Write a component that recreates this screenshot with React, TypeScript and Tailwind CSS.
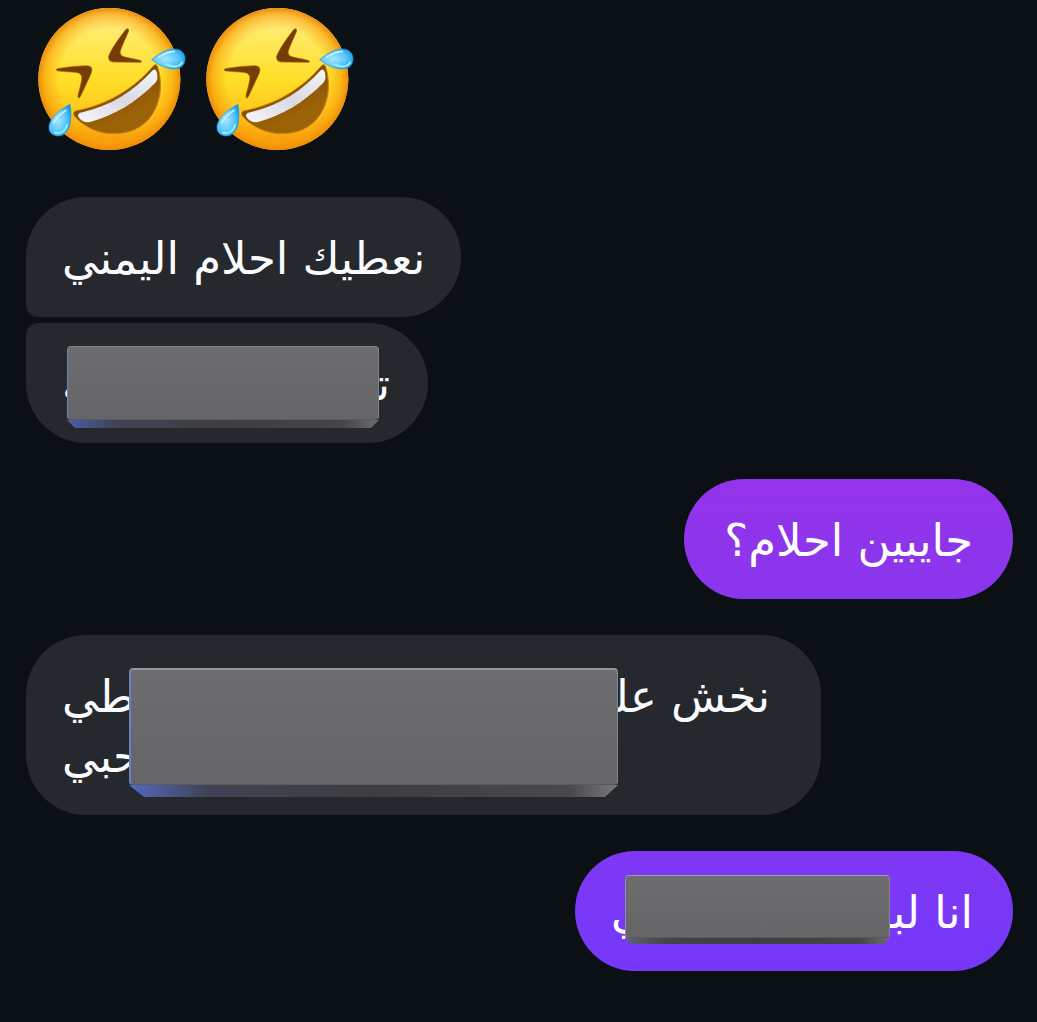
import type { ReactNode } from "react"
import clsx from "clsx"

const EMOJI = ["first", "second"]

function RollingLaugh({ id }: { id: string }) {
  const url = (name: string) => `url(#${id}-${name})`

  return (
    <svg viewBox="54 24 444 429" className="h-[143px] w-[148px]" role="img" aria-label="Rolling on the floor laughing">
      <defs>
        <linearGradient id={`${id}-face`} x1="0.5" y1="0" x2="0.5" y2="1">
          <stop offset="0" stopColor="#fff3a0" />
          <stop offset="0.2" stopColor="#ffea62" />
          <stop offset="0.5" stopColor="#ffdf28" />
          <stop offset="0.75" stopColor="#ffc61c" />
          <stop offset="1" stopColor="#f7980c" />
        </linearGradient>
        <radialGradient id={`${id}-rim`} cx="0.5" cy="0.5" r="0.5">
          <stop offset="0.7" stopColor="#f7a20a" stopOpacity="0" />
          <stop offset="0.9" stopColor="#f79c08" stopOpacity="0.6" />
          <stop offset="1" stopColor="#ee8c08" />
        </radialGradient>
        <linearGradient id={`${id}-mouth`} x1="0" y1="0" x2="0.5" y2="0.8">
          <stop offset="0" stopColor="#632f03" />
          <stop offset="1" stopColor="#9c6207" />
        </linearGradient>
        <linearGradient id={`${id}-teeth`} x1="0" y1="1" x2="1" y2="0">
          <stop offset="0" stopColor="#f6f6fa" />
          <stop offset="0.5" stopColor="#d9d9e2" />
          <stop offset="1" stopColor="#f4f4f8" />
        </linearGradient>
        <radialGradient id={`${id}-tear`} cx="0.4" cy="0.5" r="0.65">
          <stop offset="0" stopColor="#a4e7ff" />
          <stop offset="0.6" stopColor="#5cc6fa" />
          <stop offset="1" stopColor="#1b9ae6" />
        </radialGradient>
      </defs>
      <circle cx="268" cy="237" r="213" fill={url("face")} />
      <circle cx="268" cy="237" r="213" fill={url("rim")} />
      <g fill="#753c03" stroke="#a86505" strokeWidth="2" strokeLinejoin="round">
        <path d="M325 87C320 84 315 91 310 98C293 120 278 142 268 163C262 176 268 186 282 186L360 187C366 187 366 183 360 181L315 171C300 167 298 160 303 147C310 128 320 108 326 94Z" />
        <path d="M111 206C107 209 110 213 116 213L165 217C183 219 187 227 185 240C182 257 177 273 174 286C173 296 178 296 182 288L209 230C221 206 216 198 200 197C168 198 139 201 111 206Z" />
      </g>
      <path
        d="M161 338C164 332 170 332 178 330C265 312 341 266 398 200C404 192 410 192 413 200C438 281 407 370 330 394C264 414 200 391 162 347Z"
        fill={url("mouth")}
        stroke="#cf8607"
        strokeWidth="3"
      />
      <path
        d="M174 345C176 338 182 338 190 336C270 318 342 274 398 211C404 205 409 209 411 218C414 234 412 241 406 248C350 306 283 346 210 366C196 369 187 364 180 357C176 352 173 349 174 345Z"
        fill={url("teeth")}
      />
      <path d="M395 179C414 163 433 149 460 147C483 146 496 160 495 178C494 198 480 208 459 207C434 205 414 194 395 179Z" fill={url("tear")} stroke="#159bea" strokeWidth="2" />
      <path d="M150 313C154 335 154 357 149 377C143 398 127 411 108 407C89 403 82 387 90 368C99 345 123 327 150 313Z" fill={url("tear")} stroke="#159bea" strokeWidth="2" />
      <path d="M416 172C433 161 448 154 463 155M101 369C109 352 123 341 138 331" fill="none" stroke="#c2f1ff" strokeWidth="5" strokeLinecap="round" />
      <path d="M438 193C461 204 478 200 487 187M104 398C122 403 136 393 142 374" fill="none" stroke="#98f5ff" strokeWidth="5" strokeLinecap="round" />
    </svg>
  )
}

function Bubble({ className, children }: { className?: string; children: ReactNode }) {
  return (
    <div dir="rtl" className={clsx("relative max-w-full pt-8 pb-7 text-[45px] leading-[60px]", className)}>
      {children}
    </div>
  )
}

// Solid slab laid over part of a message, with a bevelled lower edge.
function Slab({ className, edge, bevel }: { className: string; edge: string; bevel: string }) {
  return (
    <div className={clsx("absolute flex flex-col", className)}>
      <div
        className={clsx(
          "flex-1 rounded-[4px] border border-r-[#858587] border-b-[#5b5b5d] bg-linear-to-b from-[#6d6d70] to-[#656567]",
          edge,
        )}
      />
      <div className={bevel} />
    </div>
  )
}

export default function App() {
  return (
    <main className="flex min-h-screen flex-col items-start bg-[#0b1014] pt-2 pr-6 pb-[51px] pl-[26px] font-['DejaVu_Sans',sans-serif] text-[#f9fbff]">
      <div className="mb-[46px] flex gap-5 pl-3">
        {EMOJI.map((id) => (
          <RollingLaugh key={id} id={id} />
        ))}
      </div>

      <Bubble className="mb-1.5 rounded-[60px] rounded-bl-xl bg-[#25282d] px-9">نعطيك احلام اليمني</Bubble>

      <Bubble className="w-[402px] rounded-[60px] rounded-tl-xl bg-[#25282d] pr-[38px] pl-9">
        <div className="flex justify-between">
          <span>تـ</span>
          <span>ـه</span>
        </div>
        <Slab
          className="top-[23px] left-[41px] h-[82px] w-[312px]"
          edge="border-t-[#858589] border-l-[#7582b3]"
          bevel="h-2 bg-[linear-gradient(90deg,#4a5da8,#404354_16%,#3e3e40_50%,#454546_88%,#6c6c6e)] [clip-path:polygon(0_0,100%_0,calc(100%-8px)_100%,8px_100%)]"
        />
      </Bubble>

      <Bubble className="mt-9 self-end rounded-[60px] bg-linear-to-b from-[#9433ea] to-[#8936ee] px-10 text-white">
        جايبين احلام؟
      </Bubble>

      <Bubble className="mt-9 w-[795px] rounded-[60px] bg-[#25282d] pr-[51px] pl-9">
        <div className="flex justify-between">
          <span>نخش علـ</span>
          <span>ـطي</span>
        </div>
        <div className="text-left">حبي</div>
        <Slab
          className="top-[33px] left-[103px] h-[129px] w-[489px]"
          edge="border-t-2 border-t-[#97979b] border-l-2 border-l-[#6e7fc0]"
          bevel="h-3 bg-[linear-gradient(90deg,#5269c4,#404354_16%,#3e3e40_50%,#49494b_90%,#7a7a7c)] [clip-path:polygon(0_0,100%_0,calc(100%-13px)_100%,15px_100%)]"
        />
      </Bubble>

      <Bubble className="mt-9 w-[438px] self-end rounded-[60px] bg-linear-to-b from-[#7f37f4] to-[#7538fa] pr-10 pl-9 text-white">
        <div className="flex justify-between">
          <span>انا لبـ</span>
          <span>ـي</span>
        </div>
        <Slab
          className="top-6 left-[50px] h-[69px] w-[265px]"
          edge="border-t-[#a0a0ad] border-l-[#8b8da3]"
          bevel="h-1.5 bg-[linear-gradient(90deg,#5f6377,#434348_16%,#3e3e40_50%,#454546_88%,#6c6c6e)] [clip-path:polygon(0_0,100%_0,calc(100%-6px)_100%,6px_100%)]"
        />
      </Bubble>
    </main>
  )
}
